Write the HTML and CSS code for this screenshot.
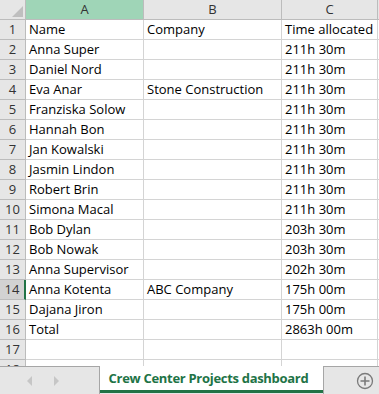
FILE: index.html
```html
<!DOCTYPE html>
<html lang="en">
<head>
    <meta charset="UTF-8">
    <title>Crew Center Projects dashboard</title>
    <link rel="stylesheet" href="styles.css">
</head>
<body>

    <!-- Sheet grid -->
    <div class="sheet">
        <div class="grid">
            <div class="corner"><span class="corner-mark"></span></div>
            <div class="col-head selected">A</div>
            <div class="col-head">B</div>
            <div class="col-head">C</div>
            <div class="col-head filler"></div>

            <div class="row-head">1</div><div class="cell">Name</div><div class="cell">Company</div><div class="cell">Time allocated</div><div class="cell filler"></div>
            <div class="row-head">2</div><div class="cell">Anna Super</div><div class="cell"></div><div class="cell">211h 30m</div><div class="cell filler"></div>
            <div class="row-head">3</div><div class="cell">Daniel Nord</div><div class="cell"></div><div class="cell">211h 30m</div><div class="cell filler"></div>
            <div class="row-head">4</div><div class="cell">Eva Anar</div><div class="cell">Stone Construction</div><div class="cell">211h 30m</div><div class="cell filler"></div>
            <div class="row-head">5</div><div class="cell">Franziska Solow</div><div class="cell"></div><div class="cell">211h 30m</div><div class="cell filler"></div>
            <div class="row-head">6</div><div class="cell">Hannah Bon</div><div class="cell"></div><div class="cell">211h 30m</div><div class="cell filler"></div>
            <div class="row-head">7</div><div class="cell">Jan Kowalski</div><div class="cell"></div><div class="cell">211h 30m</div><div class="cell filler"></div>
            <div class="row-head">8</div><div class="cell">Jasmin Lindon</div><div class="cell"></div><div class="cell">211h 30m</div><div class="cell filler"></div>
            <div class="row-head">9</div><div class="cell">Robert Brin</div><div class="cell"></div><div class="cell">211h 30m</div><div class="cell filler"></div>
            <div class="row-head">10</div><div class="cell">Simona Macal</div><div class="cell"></div><div class="cell">211h 30m</div><div class="cell filler"></div>
            <div class="row-head">11</div><div class="cell">Bob Dylan</div><div class="cell"></div><div class="cell">203h 30m</div><div class="cell filler"></div>
            <div class="row-head">12</div><div class="cell">Bob Nowak</div><div class="cell"></div><div class="cell">203h 30m</div><div class="cell filler"></div>
            <div class="row-head">13</div><div class="cell">Anna Supervisor</div><div class="cell"></div><div class="cell">202h 30m</div><div class="cell filler"></div>
            <div class="row-head active">14</div><div class="cell">Anna Kotenta</div><div class="cell">ABC Company</div><div class="cell">175h 00m</div><div class="cell filler"></div>
            <div class="row-head">15</div><div class="cell">Dajana Jiron</div><div class="cell"></div><div class="cell">175h 00m</div><div class="cell filler"></div>
            <div class="row-head">16</div><div class="cell">Total</div><div class="cell"></div><div class="cell">2863h 00m</div><div class="cell filler"></div>
            <div class="row-head">17</div><div class="cell"></div><div class="cell"></div><div class="cell"></div><div class="cell filler"></div>
            <div class="row-head">18</div><div class="cell"></div><div class="cell"></div><div class="cell"></div><div class="cell filler"></div>
        </div>
    </div>

    <!-- Sheet tabs -->
    <div class="tab-bar">
        <div class="tab-nav">
            <span class="arrow left"></span>
            <span class="arrow right"></span>
        </div>
        <div class="tab active-tab">Crew Center Projects dashboard</div>
        <div class="tab-rest">
            <svg class="add-sheet" width="18" height="18" viewBox="0 0 18 18">
                <circle cx="9" cy="9" r="7.5" fill="none" stroke="#7a7a7a" stroke-width="1.3"/>
                <path d="M9 4.5v9M4.5 9h9" stroke="#7a7a7a" stroke-width="1.6"/>
            </svg>
        </div>
    </div>

</body>
</html>
```

FILE: styles.css
```css
/* Basic styling */
body {
    margin: 0;
    padding: 0;
    width: 379px;
    height: 394px;
    overflow: hidden;
    background-color: white;
    font-family: "Open Sans", Arial, sans-serif;
    font-size: 13px;
    color: #000;
}

/* Grid area */
.sheet {
    height: 366px;
    overflow: hidden;
}

.grid {
    display: grid;
    grid-template-columns: 26px 118px 138px 96px 10px;
    grid-auto-rows: 20px;
}

.corner,
.col-head,
.row-head,
.cell {
    box-sizing: border-box;
    border-right: 1px solid #d4d4d4;
    border-bottom: 1px solid #d4d4d4;
}

.corner {
    background-color: #e6e6e6;
    border-right-color: #bcbcbc;
    border-bottom-color: #bcbcbc;
    position: relative;
}

.corner-mark {
    position: absolute;
    right: 2px;
    bottom: 2px;
    width: 0;
    height: 0;
    border-left: 11px solid transparent;
    border-bottom: 11px solid #bfbfbf;
}

/* Column headers */
.col-head {
    background-color: #e6e6e6;
    border-right-color: #bcbcbc;
    border-bottom-color: #bcbcbc;
    color: #333;
    text-align: center;
    line-height: 19px;
}

.col-head.selected {
    background-color: #9fd5b7;
}

/* Row headers */
.row-head {
    background-color: #e6e6e6;
    border-right-color: #bcbcbc;
    border-bottom-color: #bcbcbc;
    color: #333;
    text-align: center;
    line-height: 19px;
}

.row-head.active {
    background-color: #d2d2d2;
    border-right: 2px solid #217346;
}

/* Cells */
.cell {
    padding-left: 3px;
    line-height: 19px;
    white-space: nowrap;
    overflow: hidden;
}

/* Tab bar */
.tab-bar {
    display: flex;
    height: 28px;
    background-color: #e6e6e6;
}

.tab-nav {
    width: 100px;
    box-sizing: border-box;
    border-top: 1px solid #a6a6a6;
    border-right: 1px solid #a6a6a6;
    display: flex;
    align-items: center;
    padding-left: 27px;
    gap: 22px;
}

.arrow {
    width: 0;
    height: 0;
    border-top: 5px solid transparent;
    border-bottom: 5px solid transparent;
}

.arrow.left {
    border-right: 5px solid #c6c6c6;
}

.arrow.right {
    border-left: 5px solid #c6c6c6;
}

.active-tab {
    width: 223px;
    box-sizing: border-box;
    background-color: white;
    border-bottom: 3px solid #217346;
    color: #217346;
    font-weight: bold;
    font-size: 13px;
    letter-spacing: -0.3px;
    padding-right: 6px;
    text-align: center;
    line-height: 25px;
    margin-bottom: 1px;
}

.tab-rest {
    flex: 1;
    box-sizing: border-box;
    border-top: 1px solid #a6a6a6;
    border-left: 1px solid #a6a6a6;
    display: flex;
    align-items: center;
    justify-content: flex-end;
    padding-right: 5px;
}
```
